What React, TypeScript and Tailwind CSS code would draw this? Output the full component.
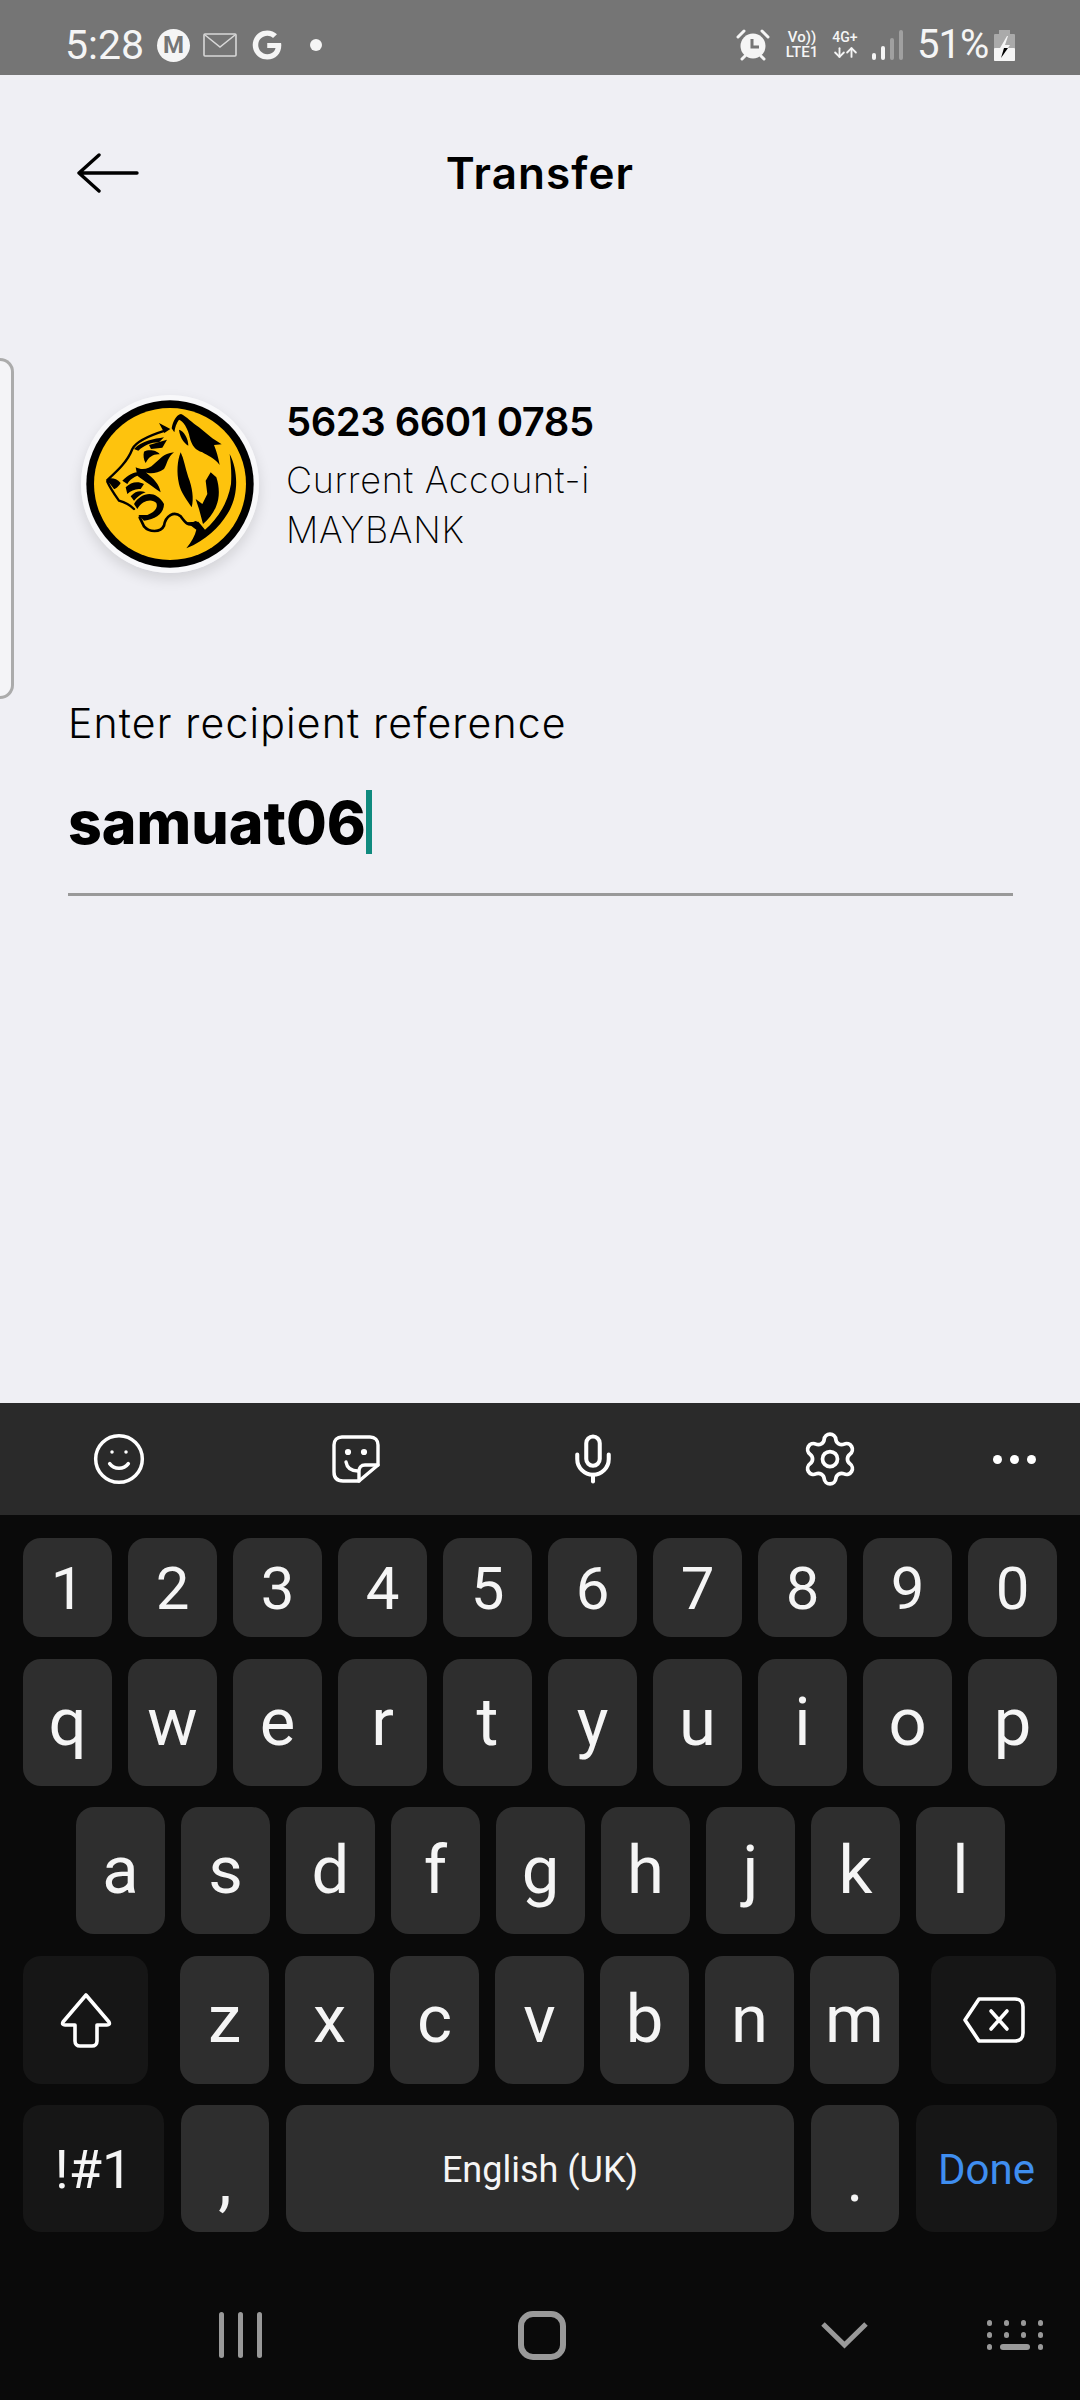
import React from "react";
import { Smile, Mic, Settings, ArrowUp } from "lucide-react";
import { FaGoogle } from "react-icons/fa";

const digits = ["1", "2", "3", "4", "5", "6", "7", "8", "9", "0"];
const topRow = ["q", "w", "e", "r", "t", "y", "u", "i", "o", "p"];
const midRow = ["a", "s", "d", "f", "g", "h", "j", "k", "l"];
const lowRow = ["z", "x", "c", "v", "b", "n", "m"];

function Key({ label }: { label: string }) {
  return (
    <div className="w-[89px] h-full shrink-0 rounded-[18px] bg-[#2e2e2e] flex items-center justify-center text-[#f5f5f5] text-[67px] leading-none">
      {label}
    </div>
  );
}

function TigerLogo() {
  return (
    <svg viewBox="-54 -42 534 534" className="w-[178px] h-[178px]">
      <circle cx="213" cy="225" r="267" fill="#f8f8fa" />
      <circle cx="213" cy="225" r="251" fill="#000" />
      <circle cx="213" cy="225" r="228" fill="#fec30d" />
      {/* ear and top of the mane */}
      <path d="M218 58C222 35 232 18 246 15C262 22 280 42 300 55L340 88L368 106L345 108C352 125 358 145 362 168C345 145 325 140 310 130C290 125 278 110 272 85C268 60 252 35 240 32C232 42 228 55 226 70Z" fill="#000" />
      <path d="M240 62C255 65 268 90 268 110C252 100 242 82 240 62Z" fill="#000" />
      <path d="M180 42L214 60L196 72Z" fill="#000" />
      {/* forehead */}
      <path d="M25 213C50 190 85 160 100 120C110 100 150 80 198 65" fill="none" stroke="#000" strokeWidth="7" strokeLinecap="round" />
      <path d="M105 120C130 95 165 90 195 85L180 100C155 100 135 110 118 125Z" fill="#000" />
      <path d="M150 108L204 92L190 116L156 120Z" fill="#000" />
      {/* eye */}
      <path d="M135 128C150 120 175 125 182 136C165 134 150 142 140 162C134 152 132 138 135 128Z" fill="#000" />
      {/* band under the eye */}
      <path d="M110 175C130 185 150 180 165 165C185 150 190 135 225 130C205 145 205 165 195 180C175 195 150 195 140 190C165 210 180 225 185 250C165 235 135 215 115 200Z" fill="#000" />
      {/* central stripe */}
      <path d="M245 130C255 150 258 175 268 205C280 235 285 270 278 295C265 275 245 250 240 225C232 190 235 155 245 130Z" fill="#000" />
      {/* muzzle */}
      <path d="M22 213C30 205 50 205 65 222C60 232 50 240 45 240C40 232 30 222 22 213Z" fill="#000" />
      <path d="M25 218C35 240 48 258 60 275C78 280 95 290 105 300" fill="none" stroke="#000" strokeWidth="7" strokeLinecap="round" />
      <path d="M70 215C90 195 110 185 135 190C120 200 95 205 85 225Z" fill="#000" />
      <path d="M80 235C95 220 115 215 135 225L125 240C110 238 95 245 85 255Z" fill="#000" />
      <path d="M95 262C110 245 125 245 140 250C125 255 115 265 105 275Z" fill="#000" />
      {/* mouth */}
      <path d="M105 285C125 250 170 240 195 285C195 310 175 330 135 335L118 318L145 318C165 310 178 298 172 282C160 268 130 272 115 300Z" fill="#000" />
      <path d="M122 325L135 352C150 370 185 372 195 350C200 320 225 305 245 322C258 340 268 355 290 340" fill="none" stroke="#000" strokeWidth="8" strokeLinecap="round" strokeLinejoin="round" />
      {/* mane */}
      <path d="M335 190L352 205C362 235 362 265 352 290C345 310 330 330 312 345L300 300L290 270L310 285L325 255L320 215Z" fill="#000" />
      <path d="M392 135C420 190 418 265 385 315C360 355 320 395 262 418C278 398 288 380 292 362L262 340L298 338L318 362C350 335 385 290 396 225C398 195 396 165 392 135Z" fill="#000" />
    </svg>
  );
}

function StickerIcon() {
  return (
    <svg viewBox="0 0 50 50" className="w-[50px] h-[50px]" fill="none" stroke="#fff" strokeWidth="3.4" strokeLinejoin="round" strokeLinecap="round">
      <path d="M47 31V11C47 6 44 3 39 3H11C6 3 3 6 3 11V38C3 44 6 47 12 47H28Z" />
      <path d="M47 31H34C30 31 28 34 28 37V47" />
      <path d="M15 28C16 34 20 37 27 37" />
      <circle cx="17" cy="18" r="1.4" fill="#fff" />
      <circle cx="33" cy="18" r="1.4" fill="#fff" />
    </svg>
  );
}

export default function App() {
  return (
    <div className="w-[1080px] h-[2400px] flex flex-col overflow-hidden bg-[#efeff4] font-['Inter',sans-serif]">
      {/* status bar */}
      <div className="h-[75px] shrink-0 bg-[#757575] flex items-center pl-[65px] pr-[65px] pt-[15px] text-[#f5f5f5] font-['Roboto',sans-serif]">
        <span className="text-[41px] leading-none w-[92px]">5:28</span>
        <div className="w-[33px] h-[33px] rounded-full bg-[#f5f5f5] flex items-center justify-center text-[#757575] text-[24px] font-bold leading-none overflow-hidden">M</div>
        <svg viewBox="0 0 34 24" className="w-[34px] h-[24px] ml-[13px]" fill="none" stroke="#d8d8d8" strokeWidth="1.6">
          <rect x="1" y="1" width="32" height="22" rx="1" />
          <path d="M2 2L17 14L32 2" />
        </svg>
        <FaGoogle className="ml-[15px] text-[#f5f5f5]" size={30} />
        <div className="w-[12px] h-[12px] rounded-full bg-[#f5f5f5] ml-[28px]" />
        <div className="flex-1" />
        <svg viewBox="0 0 34 32" className="w-[34px] h-[32px]" fill="#f5f5f5">
          <circle cx="17" cy="17" r="12.5" />
          <path d="M2 8L8 2M32 8L26 2M6 30L9 27M28 30L25 27" stroke="#f5f5f5" strokeWidth="3" strokeLinecap="round" />
          <path d="M16 10V18H23" stroke="#757575" strokeWidth="3" fill="none" />
        </svg>
        <div className="ml-[12px] w-[40px] flex flex-col items-center text-[15px] leading-[15px] font-medium">
          <span>Vo))</span>
          <span>LTE1</span>
        </div>
        <div className="ml-[7px] w-[32px] flex flex-col items-center text-[14px] leading-[15px] font-medium">
          <span>4G+</span>
          <div className="flex -space-x-[3px]">
            <ArrowUp className="rotate-180" size={15} strokeWidth={3} />
            <ArrowUp size={15} strokeWidth={3} />
          </div>
        </div>
        <div className="ml-[11px] flex items-end gap-[5px] h-[30px]">
          <div className="w-[4px] h-[7px] rounded-sm bg-[#f5f5f5]" />
          <div className="w-[4px] h-[14px] rounded-sm bg-[#f5f5f5]" />
          <div className="w-[4px] h-[22px] rounded-sm bg-[#a0a0a0]" />
          <div className="w-[4px] h-[30px] rounded-sm bg-[#a0a0a0]" />
        </div>
        <span className="ml-[14px] text-[40px] leading-none tracking-[-1px] w-[77px]">51%</span>
        <svg viewBox="0 0 21 31" className="w-[21px] h-[31px]">
          <rect x="5" y="0" width="11" height="4" fill="#aaaaaa" />
          <rect x="0" y="4" width="21" height="27" rx="1" fill="#aaaaaa" />
          <rect x="0" y="18" width="21" height="13" rx="1" fill="#f5f5f5" />
          <path d="M13 6L6 18H10L7 28L16 15H11L14 6Z" fill="#f5f5f5" />
          <path d="M10 18L7 28L14 18Z" fill="#000" />
        </svg>
      </div>

      {/* content */}
      <div className="flex-1 flex flex-col">
        <div className="h-[196px] shrink-0 grid grid-cols-[1fr_auto_1fr] items-center pl-[77px]">
          <svg viewBox="0 0 62 40" className="w-[62px] h-[40px]" fill="none" stroke="#000" strokeWidth="3.4" strokeLinecap="round" strokeLinejoin="round">
            <path d="M60 20H2M22 2L2 20L22 38" />
          </svg>
          <h1 className="text-[44px] leading-none font-semibold text-black -ml-[77px] tracking-[1.1px]">Transfer</h1>
          <div />
        </div>

        <div className="mt-[87px] h-[341px] flex items-start shrink-0">
          <div className="w-[14px] h-full rounded-r-[14px] border-[3px] border-l-0 border-[#ababab] bg-[#f4f4f7]" />
          <div className="ml-[67px] mt-[37px] w-[178px] h-[178px] rounded-full shadow-[0_6px_14px_rgba(0,0,0,0.12)]">
            <TigerLogo />
          </div>
          <div className="ml-[27px] mt-[39px] flex flex-col">
            <span className="text-[40px] leading-[50px] font-semibold text-black tracking-[-0.5px]">5623 6601 0785</span>
            <span className="text-[36px] leading-[50px] font-extralight text-black mt-[8px] tracking-[0.7px]">Current Account-i</span>
            <span className="text-[36px] leading-[50px] font-extralight text-black tracking-[0.7px]">MAYBANK</span>
          </div>
        </div>

        <div className="pl-[68px] pr-[67px] mt-[1px]">
          <p className="text-[41px] leading-[46px] font-light text-black tracking-[1.15px]">Enter recipient reference</p>
          <div className="mt-[44px] h-[106px] border-b-[3px] border-[#999999] flex items-start">
            <span className="text-[59px] leading-[66px] font-extrabold text-black">samuat06</span>
            <div className="w-[6px] h-[64px] bg-[#0f8a7e]" />
          </div>
        </div>
      </div>

      {/* keyboard toolbar */}
      <div className="h-[112px] shrink-0 bg-[#2a2a2a] flex items-center text-white">
        <div className="w-[237px] flex justify-center"><Smile size={56} strokeWidth={1.5} /></div>
        <div className="w-[237px] flex justify-center"><StickerIcon /></div>
        <div className="w-[237px] flex justify-center"><Mic size={54} strokeWidth={1.8} /></div>
        <div className="w-[237px] flex justify-center"><Settings size={60} strokeWidth={1.5} /></div>
        <div className="flex-1 flex justify-center gap-[8px]">
          <div className="w-[9px] h-[9px] rounded-full bg-white" />
          <div className="w-[9px] h-[9px] rounded-full bg-white" />
          <div className="w-[9px] h-[9px] rounded-full bg-white" />
        </div>
      </div>

      {/* keyboard */}
      <div className="h-[885px] shrink-0 bg-[#0a0a0a] pt-[23px] flex flex-col font-['Roboto',sans-serif]">
        <div className="px-[23px] flex flex-col gap-[21.5px]">
          <div className="h-[99px] flex gap-[16px] [&>div]:text-[60px] [&>div]:pt-[2px]">
            {digits.map((d) => <Key key={d} label={d} />)}
          </div>
          <div className="h-[127px] flex gap-[16px]">
            {topRow.map((k) => <Key key={k} label={k} />)}
          </div>
          <div className="h-[127px] flex gap-[16px] pl-[53px]">
            {midRow.map((k) => <Key key={k} label={k} />)}
          </div>
          <div className="h-[128px] flex gap-[16px]">
            <div className="w-[125px] rounded-[18px] bg-[#161616] flex items-center justify-center">
              <svg viewBox="0 0 52 56" className="w-[52px] h-[56px]" fill="none" stroke="#fff" strokeWidth="3.6" strokeLinejoin="round">
                <path d="M26 3L49 30C50 32 49 33 47 33H37V49C37 52 35 54 32 54H20C17 54 15 52 15 49V33H5C3 33 2 32 3 30Z" />
              </svg>
            </div>
            <div className="ml-[16px] flex gap-[16px] h-full">
              {lowRow.map((k) => <Key key={k} label={k} />)}
            </div>
            <div className="ml-[16px] w-[125px] rounded-[18px] bg-[#161616] flex items-center justify-center text-white">
              <svg viewBox="0 0 62 48" className="w-[62px] h-[48px]" fill="none" stroke="#fff" strokeWidth="3.6" strokeLinejoin="round" strokeLinecap="round">
                <path d="M16 3H52C57 3 60 6 60 11V37C60 42 57 45 52 45H16L2 24Z" />
                <path d="M28 15L44 33M44 15L28 33" />
              </svg>
            </div>
          </div>
          <div className="h-[127px] flex gap-[17px]">
            <div className="w-[141px] rounded-[18px] bg-[#161616] flex items-center justify-center pt-[2px] text-[#f5f5f5] text-[54px] leading-none">!#1</div>
            <div className="w-[88px] rounded-[18px] bg-[#2e2e2e] flex items-end justify-center text-[#f5f5f5] text-[68px] leading-none pb-[18px]">,</div>
            <div className="w-[508px] rounded-[18px] bg-[#2e2e2e] flex items-center justify-center pt-[2px] text-[#f5f5f5] text-[36px] leading-none">English (UK)</div>
            <div className="w-[88px] rounded-[18px] bg-[#2e2e2e] flex items-end justify-center text-[#f5f5f5] text-[64px] leading-none pb-[20px]">.</div>
            <div className="w-[141px] rounded-[18px] bg-[#161616] flex items-center justify-center pt-[2px] text-[#3f8ef0] text-[42px] leading-none">Done</div>
          </div>
        </div>

        {/* nav bar */}
        <div className="mt-[78px] flex items-center h-[50px] pl-[219px]">
          <div className="w-[43px] h-[46px] flex justify-between">
            <div className="w-[5px] h-full rounded-full bg-[#999999]" />
            <div className="w-[5px] h-full rounded-full bg-[#999999]" />
            <div className="w-[5px] h-full rounded-full bg-[#999999]" />
          </div>
          <div className="ml-[256px] w-[48px] h-[49px] rounded-[15px] border-[6px] border-[#999999]" />
          <svg viewBox="0 0 47 28" className="ml-[255px] w-[47px] h-[28px]" fill="none" stroke="#999999" strokeWidth="5" strokeLinejoin="miter">
            <path d="M2 3L23.5 24L45 3" />
          </svg>
          <div className="ml-[119px] w-[56px] flex flex-col gap-[6px]">
            <div className="flex justify-between">
              {[0, 1, 2, 3].map((i) => <div key={i} className="w-[5px] h-[6px] rounded-full bg-[#999999]" />)}
            </div>
            <div className="flex justify-between">
              {[0, 1, 2, 3].map((i) => <div key={i} className="w-[5px] h-[6px] rounded-full bg-[#999999]" />)}
            </div>
            <div className="flex justify-between items-center">
              <div className="w-[5px] h-[6px] rounded-full bg-[#999999]" />
              <div className="w-[30px] h-[6px] rounded-full bg-[#999999]" />
              <div className="w-[5px] h-[6px] rounded-full bg-[#999999]" />
            </div>
          </div>
        </div>
      </div>
    </div>
  );
}
